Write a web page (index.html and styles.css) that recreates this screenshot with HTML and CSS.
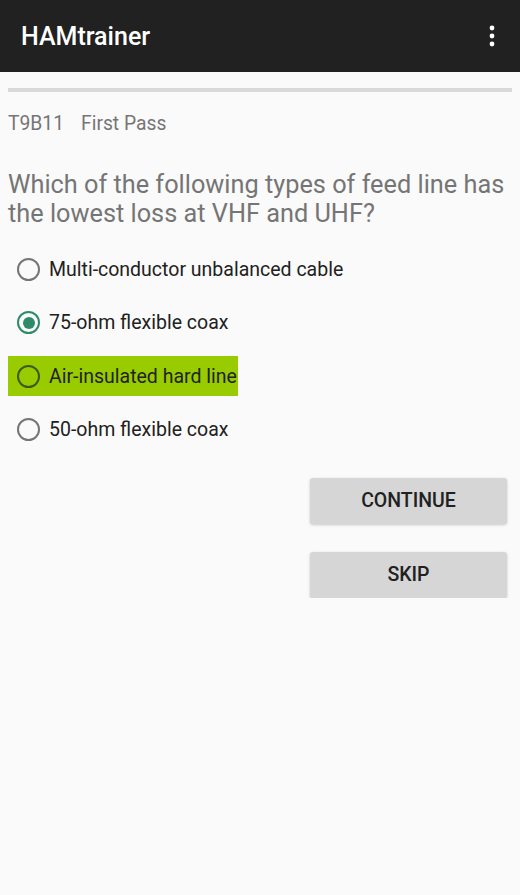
FILE: index.html
```html
<!DOCTYPE html>
<html lang="en">
<head>
  <meta charset="UTF-8" />
  <meta name="viewport" content="width=device-width, initial-scale=1.0" />
  <title>HAMtrainer</title>
  <link rel="stylesheet" href="styles.css">
</head>
<body>

  <header class="toolbar">
    <span class="titulo">HAMtrainer</span>
    <svg class="menu" width="6" height="22" viewBox="0 0 6 22">
      <circle cx="3" cy="3" r="2.4" fill="#fff"/>
      <circle cx="3" cy="11" r="2.4" fill="#fff"/>
      <circle cx="3" cy="19" r="2.4" fill="#fff"/>
    </svg>
  </header>

  <main class="contenido">
    <div class="progreso"></div>

    <div class="info">
      <span>T9B11</span>
      <span>First Pass</span>
    </div>

    <p class="pregunta">Which of the following types of feed line has the lowest loss at VHF and UHF?</p>

    <div class="opciones">
      <label class="opcion"><span class="radio"></span>Multi-conductor unbalanced cable</label>
      <label class="opcion"><span class="radio marcado"></span>75-ohm flexible coax</label>
      <label class="opcion correcta"><span class="radio"></span>Air-insulated hard line</label>
      <label class="opcion"><span class="radio"></span>50-ohm flexible coax</label>
    </div>

    <div class="botones">
      <button>CONTINUE</button>
      <button>SKIP</button>
    </div>
  </main>

</body>
</html>
```

FILE: styles.css
```css
body {
  margin: 0;
  background-color: #fafafa;
  font-family: Roboto, "Liberation Sans", sans-serif;
}
.toolbar {
  display: flex;
  justify-content: space-between;
  align-items: center;
  height: 72px;
  padding: 0 25px 0 21px;
  background-color: #212121;
  box-sizing: border-box;
}
.toolbar .titulo {
  color: #fff;
  font-size: 25px;
  font-weight: 500;
}
.toolbar .menu {
  margin-top: -1px;
}
.contenido {
  padding: 16px 8px 0 8px;
}
.progreso {
  height: 4px;
  background-color: #d9d9d9;
}
.info {
  display: flex;
  gap: 17px;
  margin-top: 20px;
  color: #757575;
  font-size: 19.3px;
}
.pregunta {
  margin: 35px 0 0 0;
  color: #757575;
  font-size: 25.3px;
  line-height: 29px;
}
.opciones {
  display: flex;
  flex-direction: column;
  align-items: flex-start;
  gap: 13.5px;
  margin-top: 21px;
}
.opcion {
  display: inline-flex;
  align-items: center;
  height: 40px;
  padding-right: 1px;
  color: #212121;
  font-size: 19.5px;
}
.opcion.correcta {
  background-color: #99cc00;
}
.radio {
  width: 23px;
  height: 23px;
  border: 2px solid #757575;
  border-radius: 50%;
  margin: 0 9px 0 9px;
  box-sizing: border-box;
  position: relative;
}
.correcta .radio {
  border-color: #3d5a1a;
}
.radio.marcado {
  border-color: #2e8b6a;
}
.radio.marcado::after {
  content: "";
  position: absolute;
  top: 3.5px;
  left: 3.5px;
  width: 12px;
  height: 12px;
  border-radius: 50%;
  background-color: #2e8b6a;
}
.botones {
  display: flex;
  flex-direction: column;
  align-items: flex-end;
  gap: 28px;
  margin-top: 28px;
  padding-right: 5px;
}
.botones button {
  width: 197px;
  height: 46px;
  border: none;
  border-radius: 3px;
  background-color: #d6d6d6;
  color: #212121;
  font-family: Roboto, "Liberation Sans", sans-serif;
  font-size: 19.5px;
  font-weight: 500;
  box-shadow: 0 1px 3px rgba(0,0,0,0.2);
}
```
